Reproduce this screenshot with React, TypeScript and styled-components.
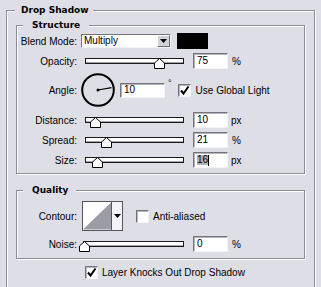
import React from "react";
import styled, { createGlobalStyle } from "styled-components";

const BG = "#dedee6";
const LINE = "#8c8c96";
const DARK = "#74747c";

const Global = createGlobalStyle`
  html, body { margin: 0; padding: 0; background: ${BG}; overflow: hidden; }
  body {
    font-family: "Liberation Sans", Arial, sans-serif;
    font-size: 10px;
    color: #000;
  }
`;

const Page = styled.div`
  width: 321px;
  height: 287px;
  overflow: hidden;
  box-sizing: border-box;
  padding: 4px 0 0 6px;
`;

const Group = styled.fieldset<{ $w: number; $pad: string }>`
  margin: 0;
  box-sizing: border-box;
  width: ${(p) => p.$w}px;
  min-width: 0;
  padding: ${(p) => p.$pad};
  border: 1px solid ${LINE};
  box-shadow: inset 1px 1px 0 #fff, 1px 1px 0 #fff;
`;

const Title = styled.legend<{ $ml: number; $pl: number; $pr: number }>`
  font-family: "DejaVu Sans", sans-serif;
  font-weight: bold;
  font-size: 9px;
  line-height: 12px;
  margin-left: ${(p) => p.$ml}px;
  padding: 0 ${(p) => p.$pr}px 0 ${(p) => p.$pl}px;
  background: ${BG};
`;

const Gap = styled.div<{ $h: number }>`
  height: ${(p) => p.$h}px;
`;

const Row = styled.div<{ $h: number; $mt?: number }>`
  display: flex;
  align-items: center;
  height: ${(p) => p.$h}px;
  margin-top: ${(p) => p.$mt ?? 0}px;
`;

const Label = styled.span`
  flex: none;
  width: 60px;
  text-align: right;
  white-space: nowrap;
`;

const Text = styled.span<{ $ml: number }>`
  margin-left: ${(p) => p.$ml}px;
  white-space: nowrap;
`;

const Degree = styled.span`
  margin-left: 3px;
  align-self: flex-start;
  margin-top: 5px;
  font-size: 9px;
`;

const Field = styled.div<{ $w: number; $h: number; $ml: number }>`
  flex: none;
  box-sizing: border-box;
  width: ${(p) => p.$w}px;
  height: ${(p) => p.$h}px;
  margin-left: ${(p) => p.$ml}px;
  background: #fff;
  border: 1px solid;
  border-color: ${DARK} #f4f4f8 #f4f4f8 ${DARK};
  box-shadow: inset 1px 1px 0 #b4b4bc;
  padding-left: 3px;
  display: flex;
  align-items: center;
  line-height: 1;
`;

const Selected = styled.span`
  background: #b2b2ba;
`;

const Caret = styled.span`
  width: 1px;
  height: 11px;
  background: #000;
`;

const SliderBox = styled.div<{ $w: number; $ml: number }>`
  flex: none;
  position: relative;
  width: ${(p) => p.$w}px;
  height: 16px;
  margin-left: ${(p) => p.$ml}px;
`;

const Track = styled.div`
  position: relative;
  box-sizing: border-box;
  margin-top: 5px;
  height: 6px;
  background: #fff;
  border: 1px solid #1a1a1a;
  box-shadow: inset 0 -1px 0 #a4a4ac;
`;

const Thumb = styled.svg`
  position: absolute;
  top: 5px;
  display: block;
`;

const Select = styled.div`
  flex: none;
  box-sizing: border-box;
  width: 90px;
  height: 14px;
  margin-left: 4px;
  display: flex;
  background: #fff;
  border: 1px solid;
  border-color: ${DARK} #f4f4f8 #f4f4f8 ${DARK};
`;

const SelectText = styled.span`
  flex: 1;
  padding-left: 2px;
  line-height: 12px;
`;

const SelectButton = styled.div`
  flex: none;
  width: 13px;
  box-sizing: border-box;
  background: #d2d2da;
  border: 1px solid;
  border-color: #fff #6c6c74 #6c6c74 #fff;
  display: flex;
  align-items: center;
  justify-content: center;
`;

const Swatch = styled.div`
  flex: none;
  width: 31px;
  height: 16px;
  margin-left: 6px;
  background: #000;
`;

const Dial = styled.svg`
  flex: none;
  margin-left: 4px;
  display: block;
`;

const Box = styled.div<{ $ml: number }>`
  flex: none;
  box-sizing: border-box;
  width: 13px;
  height: 13px;
  margin-left: ${(p) => p.$ml}px;
  background: #fff;
  border: 1px solid;
  border-color: ${DARK} #f4f4f8 #f4f4f8 ${DARK};
  box-shadow: inset 1px 1px 0 #b4b4bc;
  display: flex;
  align-items: center;
  justify-content: center;
`;

const Contour = styled.div`
  flex: none;
  box-sizing: border-box;
  width: 41px;
  height: 30px;
  margin-left: 5px;
  display: flex;
  border: 1px solid #55555d;
  background: #fff;
`;

const ContourArrow = styled.div`
  flex: none;
  width: 10px;
  border-left: 1px solid #55555d;
  background: #f4f4f8;
  display: flex;
  align-items: center;
  justify-content: center;
`;

const Indent = styled.div`
  padding-left: 69px;
`;

function Check({ checked, ml }: { checked?: boolean; ml: number }) {
  return (
    <Box $ml={ml}>
      {checked && (
        <svg width="11" height="11" viewBox="0 0 11 11">
          <path d="M2 5.5 L4.5 8.5 L9.5 1.5" fill="none" stroke="#000" strokeWidth="2" />
        </svg>
      )}
    </Box>
  );
}

function Slider({ pct, w, ml }: { pct: number; w: number; ml: number }) {
  return (
    <SliderBox $w={w} $ml={ml}>
      <Track />
      <Thumb width="11" height="11" viewBox="0 0 11 11" style={{ left: Math.round(pct * w) - 5 }}>
        <polygon points="5.5,0.5 10.5,5 10.5,10.5 0.5,10.5 0.5,5" fill="#fff" stroke="#000" strokeWidth="1" />
      </Thumb>
    </SliderBox>
  );
}

function DownArrow() {
  return (
    <svg width="7" height="4" viewBox="0 0 7 4">
      <polygon points="0,0 7,0 3.5,4" fill="#000" />
    </svg>
  );
}

export default function App() {
  return (
    <Page>
      <Global />
      <Group $w={309} $pad="3px 9px 40px 9px">
        <Title $ml={-1} $pl={6} $pr={4}>Drop Shadow</Title>
        <Group $w={289} $pad="2px 0 5px 0">
          <Title $ml={6} $pl={9} $pr={9}>Structure</Title>
          <Row $h={16}>
            <Label>Blend Mode:</Label>
            <Select>
              <SelectText>Multiply</SelectText>
              <SelectButton>
                <DownArrow />
              </SelectButton>
            </Select>
            <Swatch />
          </Row>
          <Row $h={16} $mt={4}>
            <Label>Opacity:</Label>
            <Slider pct={0.75} w={99} ml={8} />
            <Field $w={35} $h={16} $ml={9}>75</Field>
            <Text $ml={4}>%</Text>
          </Row>
          <Row $h={34} $mt={4}>
            <Label>Angle:</Label>
            <Dial width="34" height="34" viewBox="0 0 34 34">
              <circle cx="17" cy="17" r="15.8" fill="none" stroke="#000" strokeWidth="2" />
              <line x1="17" y1="17" x2="30.5" y2="14.6" stroke="#000" strokeWidth="1.2" />
              <circle cx="17" cy="17" r="1.5" fill="#000" />
            </Dial>
            <Field $w={45} $h={15} $ml={5}>10</Field>
            <Degree>°</Degree>
            <Check checked ml={6} />
            <Text $ml={5}>Use Global Light</Text>
          </Row>
          <Row $h={16} $mt={5}>
            <Label>Distance:</Label>
            <Slider pct={0.1} w={99} ml={8} />
            <Field $w={35} $h={16} $ml={9}>10</Field>
            <Text $ml={3}>px</Text>
          </Row>
          <Row $h={16} $mt={4}>
            <Label>Spread:</Label>
            <Slider pct={0.21} w={99} ml={8} />
            <Field $w={35} $h={16} $ml={9}>21</Field>
            <Text $ml={4}>%</Text>
          </Row>
          <Row $h={16} $mt={4}>
            <Label>Size:</Label>
            <Slider pct={0.12} w={99} ml={8} />
            <Field $w={35} $h={16} $ml={9}>
              <Selected>16</Selected>
              <Caret />
            </Field>
            <Text $ml={3}>px</Text>
          </Row>
        </Group>
        <Gap $h={10} />
        <Group $w={289} $pad="5px 0 6px 0">
          <Title $ml={6} $pl={9} $pr={8}>Quality</Title>
          <Row $h={30}>
            <Label>Contour:</Label>
            <Contour>
              <svg width="29" height="28" viewBox="0 0 29 28">
                <rect width="29" height="28" fill="#fff" />
                <polygon points="0,28 29,0 29,28" fill="#9c9ca4" />
              </svg>
              <ContourArrow>
                <DownArrow />
              </ContourArrow>
            </Contour>
            <Check ml={13} />
            <Text $ml={4}>Anti-aliased</Text>
          </Row>
          <Row $h={16} $mt={5}>
            <Label>Noise:</Label>
            <Slider pct={0.01} w={101} ml={6} />
            <Field $w={35} $h={16} $ml={9}>0</Field>
            <Text $ml={4}>%</Text>
          </Row>
        </Group>
        <Gap $h={7} />
        <Indent>
          <Row $h={13}>
            <Check checked ml={0} />
            <Text $ml={4}>Layer Knocks Out Drop Shadow</Text>
          </Row>
        </Indent>
      </Group>
    </Page>
  );
}
